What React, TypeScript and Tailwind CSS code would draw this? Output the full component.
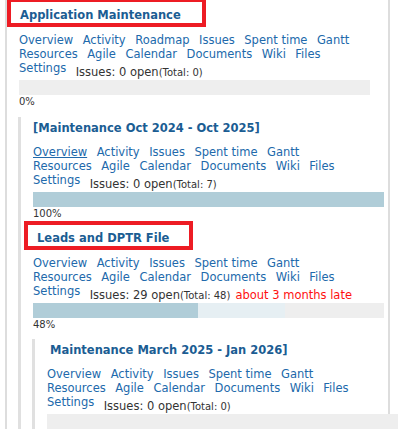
import type { ReactNode } from 'react';

const fullMenu = ["Overview", "Activity", "Roadmap", "Issues", "Spent time", "Gantt", "|", "Resources", "Agile", "Calendar", "Documents", "Wiki", "Files", "|", "Settings"];
const shortMenu = fullMenu.filter((item) => item !== "Roadmap");

type ProjectProps = {
  title: string;
  boxClass?: string;
  titlePad?: string;
  menu: string[];
  underlineFirst?: boolean;
  open: number;
  total: number;
  late?: string;
  bar: ReactNode;
  percent: string;
  children?: ReactNode;
};

const Project = ({ title, boxClass, titlePad = '', menu, underlineFirst, open, total, late, bar, percent, children }: ProjectProps) => {
  return (
    <div>
      {boxClass ? (
        <div className={`${boxClass} h-[29px] border-4 border-[#ed1c24] pt-[5px] pl-[9px] leading-[14px]`}>
          <a href="#" className="text-[11.5px] font-bold text-[#1b5d93]">{title}</a>
        </div>
      ) : (
        <div className={`h-[17px] pt-[3px] leading-[14px] ${titlePad}`}>
          <a href="#" className="text-[11.5px] font-bold text-[#1b5d93]">{title}</a>
        </div>
      )}

      {/* project menu + issue count, "|" marks a line break */}
      <div className={`${boxClass ? 'mt-[6px]' : 'mt-[11px]'} flex w-[345px] flex-wrap gap-x-[9.5px] text-[11.5px] leading-[14px]`}>
        {menu.map((item, index) =>
          item === "|" ? (
            <span key={index} className="h-0 basis-full" />
          ) : (
            <a key={index} href="#" className={`text-[#2169ab] ${underlineFirst && index === 0 ? 'underline' : ''}`}>
              {item}
            </a>
          )
        )}
        <span className="whitespace-nowrap pt-[4px] text-[#333333]">
          Issues: {open} open<span className="text-[10px]">(Total: {total})</span>
          {late && <span className="ml-[5px] text-[#ff1010]">{late}</span>}
        </span>
      </div>

      <div className="flex h-[15px] w-[351px] bg-[#eeeeee]">{bar}</div>
      <p className="text-[10px] leading-[13px] text-[#333333]">{percent}</p>

      {children}
    </div>
  );
};

const App = () => {
  return (
    <div className="h-[429px] w-[398px] overflow-hidden bg-white font-['DejaVu_Sans',sans-serif]">
      <div className="-mt-[2px] ml-[5px] min-h-[431px] w-[385px] border-x-2 border-[#dddddd] pl-[12px]">
        <Project
          title="Application Maintenance"
          boxClass="-ml-[12px] w-[199px]"
          menu={fullMenu}
          open={0}
          total={0}
          bar={null}
          percent="0%"
        >
          <div className="-ml-px mt-[9px] border-l-[3px] border-[#e0e0e0] pl-[12px]">
            <Project
              title="[Maintenance Oct 2024 - Oct 2025]"
              menu={shortMenu}
              underlineFirst
              open={0}
              total={7}
              bar={<div className="h-full w-full bg-[#b0cdd8]" />}
              percent="100%"
            />

            <div className="mt-px">
              <Project
                title="Leads and DPTR File"
                boxClass="-ml-[9px] w-[169px]"
                menu={shortMenu}
                open={29}
                total={48}
                late="about 3 months late"
                bar={
                  <>
                    <div className="h-full w-[165px] bg-[#b0cdd8]" />
                    <div className="h-full w-[87px] bg-[#e6eff3]" />
                  </>
                }
                percent="48%"
              >
                <div className="-ml-px mt-[8px] border-l-[3px] border-[#e0e0e0] pl-[12px]">
                  <Project
                    title="Maintenance March 2025 - Jan 2026]"
                    titlePad="pl-[3px]"
                    menu={shortMenu}
                    open={0}
                    total={0}
                    bar={null}
                    percent="0%"
                  />
                </div>
              </Project>
            </div>
          </div>
        </Project>
      </div>
    </div>
  );
};

export default App;
